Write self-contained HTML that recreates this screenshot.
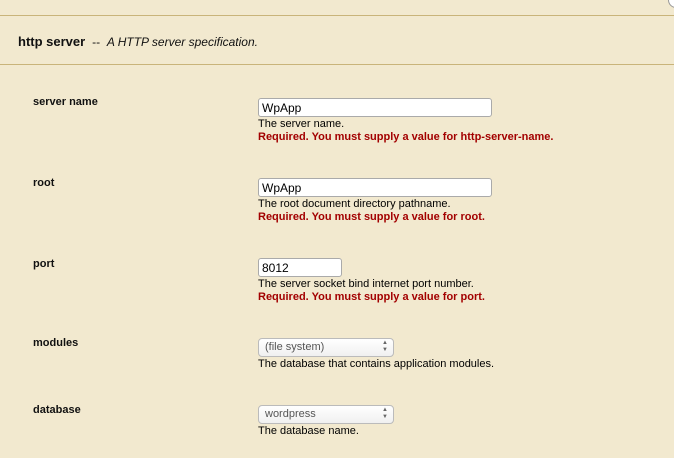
<!DOCTYPE html>
<html><head><style>
body{margin:0;width:674px;height:458px;background:#f2e9cf;font-family:"Liberation Sans",sans-serif;position:relative;overflow:hidden;color:#000}
.hl{position:absolute;left:0;width:674px;height:1px;background:#c9b47a}
.a{position:absolute;white-space:nowrap}
.lbl{font-size:11px;font-weight:bold;left:33px;color:#111}
.inp{position:absolute;left:258px;height:17px;background:#fff;border:1px solid #aaa;border-radius:3px;font-size:12px;line-height:18px;padding-left:3px;box-sizing:content-box}
.sel{position:absolute;left:258px;height:17px;background:linear-gradient(#fff,#f0f0f0);border:1px solid #bbb;border-radius:4px;font-size:11px;line-height:17px;padding-left:6px;color:#555}
.sel i{position:absolute;right:5px;top:1px;font-style:normal;font-size:6px;line-height:7px;color:#666}
.h{left:258px;font-size:11px}
.r{left:258px;font-size:11px;font-weight:bold;color:#a30000}
</style></head><body>
<div class="hl" style="top:15px"></div>
<div class="hl" style="top:64px"></div>
<div style="position:absolute;left:668px;top:-8px;width:14px;height:14px;border-radius:50%;border:1px solid #999;background:#fff"></div>
<div class="a" style="left:18px;top:34px;font-size:13px;font-weight:bold;color:#111">http server <span style="font-weight:normal;font-size:12px">&nbsp;--&nbsp; <i>A HTTP server specification.</i></span></div>

<div class="a lbl" style="top:96px">server name</div>
<div class="inp" style="top:98px;width:229px">WpApp</div>
<div class="a h" style="top:118px">The server name.</div>
<div class="a r" style="top:131px">Required. You must supply a value for http-server-name.</div>

<div class="a lbl" style="top:177px">root</div>
<div class="inp" style="top:178px;width:229px">WpApp</div>
<div class="a h" style="top:198px">The root document directory pathname.</div>
<div class="a r" style="top:211px">Required. You must supply a value for root.</div>

<div class="a lbl" style="top:258px">port</div>
<div class="inp" style="top:258px;width:79px">8012</div>
<div class="a h" style="top:278px">The server socket bind internet port number.</div>
<div class="a r" style="top:291px">Required. You must supply a value for port.</div>

<div class="a lbl" style="top:337px">modules</div>
<div class="sel" style="top:338px;width:128px">(file system)<i>▲<br>▼</i></div>
<div class="a h" style="top:358px">The database that contains application modules.</div>

<div class="a lbl" style="top:404px">database</div>
<div class="sel" style="top:405px;width:128px">wordpress<i>▲<br>▼</i></div>
<div class="a h" style="top:425px">The database name.</div>
</body></html>
